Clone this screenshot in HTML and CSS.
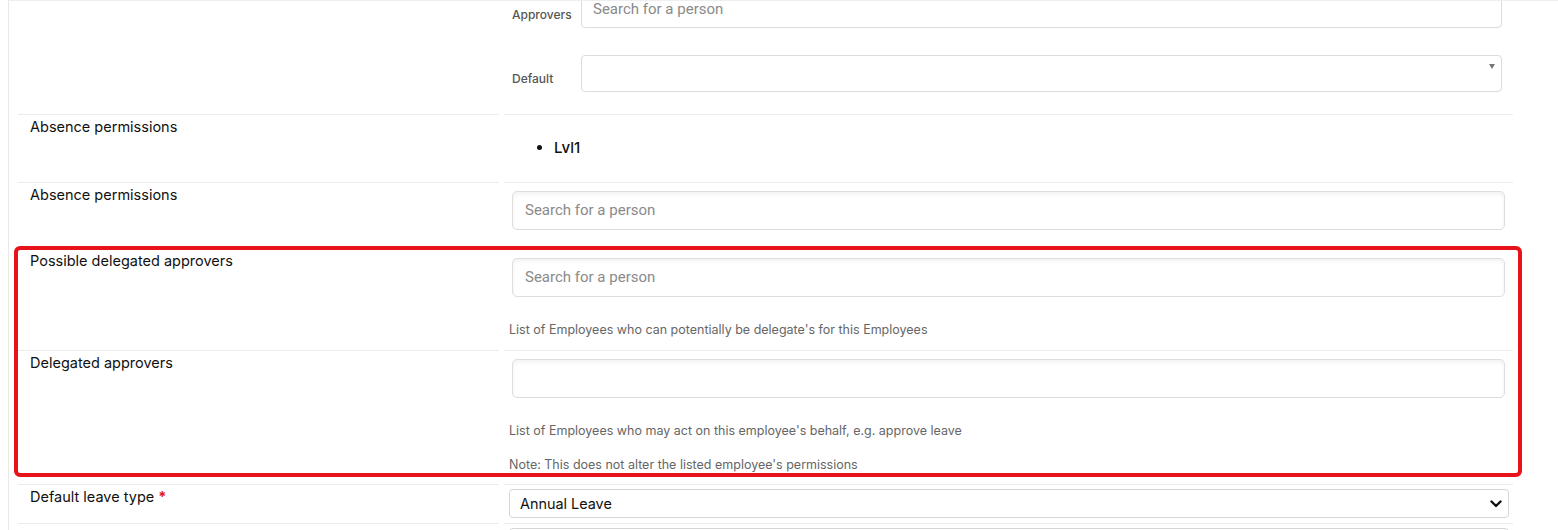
FILE: index.html
```html
<!DOCTYPE html>
<html lang="en">
<head>
<meta charset="utf-8">
<title>Employee settings</title>
<link rel="stylesheet" href="styles.css">
</head>
<body>
<div class="page">
  <div class="sheet">
    <div class="row row-approvers">
      <div class="cell label-cell"></div>
      <div class="cell value-cell">
        <div class="subform">
          <label class="sublabel">Approvers</label>
          <div class="subinput placeholder">Search for a person</div>
          <label class="sublabel">Default</label>
          <div class="subinput subselect"><span class="tri"></span></div>
        </div>
      </div>
    </div>

    <div class="row">
      <div class="cell label-cell">Absence permissions</div>
      <div class="cell value-cell">
        <ul class="perm-list"><li>Lvl1</li></ul>
      </div>
    </div>

    <div class="row">
      <div class="cell label-cell">Absence permissions</div>
      <div class="cell value-cell">
        <div class="input placeholder">Search for a person</div>
      </div>
    </div>

    <div class="highlight">
      <div class="row row-help">
        <div class="cell label-cell">Possible delegated approvers</div>
        <div class="cell value-cell">
          <div class="input placeholder">Search for a person</div>
          <p class="help">List of Employees who can potentially be delegate's for this Employees</p>
        </div>
      </div>
      <div class="row row-help">
        <div class="cell label-cell">Delegated approvers</div>
        <div class="cell value-cell">
          <div class="input"></div>
          <p class="help">List of Employees who may act on this employee's behalf, e.g. approve leave</p>
          <p class="help help-second">Note: This does not alter the listed employee's permissions</p>
        </div>
      </div>
    </div>

    <div class="row row-tight">
      <div class="cell label-cell">Default leave type <span class="req">*</span></div>
      <div class="cell value-cell">
        <div class="select">
          <span>Annual Leave</span>
          <svg class="chev" width="12" height="8" viewBox="0 0 12 8"><path d="M1.5 1.5 L6 6 L10.5 1.5" fill="none" stroke="#111" stroke-width="2.4" stroke-linecap="round" stroke-linejoin="round"/></svg>
        </div>
      </div>
    </div>

    <div class="row row-tight">
      <div class="cell label-cell"></div>
      <div class="cell value-cell">
        <div class="select"></div>
      </div>
    </div>
  </div>
</div>
</body>
</html>
```

FILE: styles.css
```css
html, body {
  margin: 0;
  padding: 0;
  background: #fff;
}

body {
  font-family: Inter, "Noto Sans", "Liberation Sans", sans-serif;
  color: #111;
  font-size: 15px;
}

.page {
  margin-left: 8px;
  height: 530px;
  overflow: hidden;
  border-left: 1px solid #e8e8e8;
  border-top: 1px solid #efefef;
  padding-left: 9px;
  box-sizing: border-box;
}

.sheet {
  width: 1495px;
  margin-top: -19px;
}

.row {
  display: grid;
  grid-template-columns: 481px 1009px;
  column-gap: 5px;
}

.cell {
  border-top: 1px solid #ececec;
  box-sizing: border-box;
}

.label-cell {
  padding: 2px 12px 0;
  line-height: 20px;
  font-size: 14.5px;
  color: #111;
}

.value-cell {
  display: flex;
  flex-direction: column;
  padding: 8px 8px 8px;
}

/* nested approvers form */
.subform {
  display: grid;
  grid-template-columns: 69px 1fr;
  row-gap: 27px;
  margin-right: 3px;
  padding-bottom: 14px;
}

.sublabel {
  align-self: end;
  padding-bottom: 5px;
  font-size: 12px;
  line-height: 16px;
  font-weight: 500;
  color: #555;
}

.subinput {
  height: 37px;
  box-sizing: border-box;
  border: 1px solid #dcdcdc;
  border-radius: 4px;
  padding: 0 11px;
  line-height: 35px;
  position: relative;
}

.subinput.placeholder {
  line-height: 16px;
  padding-top: 9px;
}

.tri {
  position: absolute;
  right: 6px;
  top: 8px;
  width: 0;
  height: 0;
  border-left: 3px solid transparent;
  border-right: 3px solid transparent;
  border-top: 5px solid #777;
}

.perm-list {
  margin: 15px 0 16px;
  padding-left: 42px;
  line-height: 20px;
  font-weight: 500;
  color: #111;
}

.input {
  flex: none;
  height: 39px;
  box-sizing: border-box;
  border: 1px solid #dedede;
  border-radius: 5px;
  box-shadow: inset 0 2px 4px rgba(0, 0, 0, 0.06);
  padding: 0 12px;
  line-height: 37px;
  margin-bottom: 10px;
}

.placeholder {
  color: #8a8a8a;
  font-family: Roboto, "Liberation Sans", sans-serif;
  font-size: 15px;
}

.row-help .value-cell {
  padding-top: 8px;
}

.row-help:first-child .value-cell {
  padding-top: 9px;
}

.row-help .input {
  margin-bottom: 0;
}

.help {
  margin: 24px 0 0 -3px;
  font-size: 12.5px;
  line-height: 18px;
  color: #666;
}

.help:last-child {
  margin-bottom: 3px;
}

.help-second {
  margin-top: 16px;
}

.help-second:last-child {
  margin-bottom: 2px;
}

.highlight {
  position: relative;
}

.highlight::after {
  content: "";
  position: absolute;
  top: -2px;
  bottom: 7px;
  left: -4px;
  right: -9px;
  border: 4px solid #e8121b;
  border-radius: 6px;
  pointer-events: none;
}

.row-tight .value-cell {
  padding: 4px 4px 5px 5px;
}

.select {
  height: 29px;
  box-sizing: border-box;
  border: 1px solid #d6d6d6;
  border-radius: 4px;
  display: flex;
  align-items: center;
  justify-content: space-between;
  padding: 0 6px 0 10px;
  font-size: 14.4px;
  color: #111;
}

.chev {
  display: block;
}

.req {
  color: #e0141b;
  font-weight: 700;
}
```
